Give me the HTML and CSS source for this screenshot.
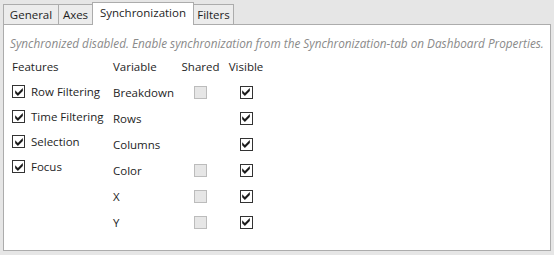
FILE: index.html
```html
<!DOCTYPE html>
<html>
<head>
<meta charset="utf-8">
<link rel="stylesheet" href="styles.css">
</head>
<body>
<div class="window">
  <div class="tabs">
    <div class="tab tab-general">General</div>
    <div class="tab tab-axes">Axes</div>
    <div class="tab tab-sync active">Synchronization</div>
    <div class="tab tab-filters">Filters</div>
  </div>
  <div class="panel">
    <p class="info">Synchronized disabled. Enable synchronization from the Synchronization-tab on Dashboard Properties.</p>
    <div class="content">
      <div class="features">
        <div class="head">Features</div>
        <div class="frow"><span class="cb"><svg viewBox="0 0 7.1 7.4"><polygon points="0,2 0,4.8 2.5,7.4 7.1,2.8 7.1,0 2.5,4.6"/></svg></span>Row Filtering</div>
        <div class="frow"><span class="cb"><svg viewBox="0 0 7.1 7.4"><polygon points="0,2 0,4.8 2.5,7.4 7.1,2.8 7.1,0 2.5,4.6"/></svg></span>Time Filtering</div>
        <div class="frow"><span class="cb"><svg viewBox="0 0 7.1 7.4"><polygon points="0,2 0,4.8 2.5,7.4 7.1,2.8 7.1,0 2.5,4.6"/></svg></span>Selection</div>
        <div class="frow"><span class="cb"><svg viewBox="0 0 7.1 7.4"><polygon points="0,2 0,4.8 2.5,7.4 7.1,2.8 7.1,0 2.5,4.6"/></svg></span>Focus</div>
      </div>
      <div class="vars">
        <div class="head">Variable</div>
        <div class="head c">Shared</div>
        <div class="head c">Visible</div>

        <div class="vrow">Breakdown</div>
        <div class="vrow c"><span class="cb off"></span></div>
        <div class="vrow c"><span class="cb"><svg viewBox="0 0 7.1 7.4"><polygon points="0,2 0,4.8 2.5,7.4 7.1,2.8 7.1,0 2.5,4.6"/></svg></span></div>

        <div class="vrow">Rows</div>
        <div class="vrow c"></div>
        <div class="vrow c"><span class="cb"><svg viewBox="0 0 7.1 7.4"><polygon points="0,2 0,4.8 2.5,7.4 7.1,2.8 7.1,0 2.5,4.6"/></svg></span></div>

        <div class="vrow">Columns</div>
        <div class="vrow c"></div>
        <div class="vrow c"><span class="cb"><svg viewBox="0 0 7.1 7.4"><polygon points="0,2 0,4.8 2.5,7.4 7.1,2.8 7.1,0 2.5,4.6"/></svg></span></div>

        <div class="vrow">Color</div>
        <div class="vrow c"><span class="cb off"></span></div>
        <div class="vrow c"><span class="cb"><svg viewBox="0 0 7.1 7.4"><polygon points="0,2 0,4.8 2.5,7.4 7.1,2.8 7.1,0 2.5,4.6"/></svg></span></div>

        <div class="vrow">X</div>
        <div class="vrow c"><span class="cb off"></span></div>
        <div class="vrow c"><span class="cb"><svg viewBox="0 0 7.1 7.4"><polygon points="0,2 0,4.8 2.5,7.4 7.1,2.8 7.1,0 2.5,4.6"/></svg></span></div>

        <div class="vrow">Y</div>
        <div class="vrow c"><span class="cb off"></span></div>
        <div class="vrow c"><span class="cb"><svg viewBox="0 0 7.1 7.4"><polygon points="0,2 0,4.8 2.5,7.4 7.1,2.8 7.1,0 2.5,4.6"/></svg></span></div>
      </div>
    </div>
  </div>
</div>
</body>
</html>
```
FILE: styles.css
```css
html, body {
  margin: 0;
  padding: 0;
  background: #e6e6e6;
}
body {
  width: 554px;
  height: 255px;
  overflow: hidden;
  font-family: "Open Sans", "Noto Sans", sans-serif;
  font-size: 11.5px;
  color: #1e1e1e;
}
.window {
  padding: 0 3px;
}
.tabs {
  display: flex;
  align-items: flex-end;
  height: 24px;
  position: relative;
  z-index: 2;
}
.tab {
  box-sizing: border-box;
  height: 20px;
  line-height: 19px;
  border: 1px solid #acacac;
  border-bottom: none;
  margin-right: -1px;
  background: #ececec;
  white-space: nowrap;
  text-align: center;
}
.tab-general { width: 56px; }
.tab-axes { width: 35px; }
.tab-sync { width: 102px; }
.tab-filters { width: 41px; }
.tab.active {
  background: #fff;
  height: 23px;
  padding-bottom: 3px;
  margin-bottom: -1px;
  position: relative;
  z-index: 3;
}
.panel {
  width: 546px;
  height: 215px;
  padding-top: 10px;
  border: 1px solid #acacac;
  background: #fff;
  position: relative;
  z-index: 1;
}
.info {
  margin: 0 0 4px 6px;
  line-height: 16px;
  font-size: 11.75px;
  font-style: italic;
  color: #8a8a8a;
  white-space: nowrap;
}
.content {
  display: flex;
  padding-left: 8px;
}
.features {
  width: 101px;
}
.head {
  height: 24px;
  line-height: 24px;
  white-space: nowrap;
}
.frow {
  height: 25px;
  display: flex;
  align-items: center;
  gap: 6px;
  white-space: nowrap;
}
.vars {
  display: grid;
  grid-template-columns: 59px 37px 34px;
  column-gap: 10px;
  grid-template-rows: 24px repeat(6, 26px);
}
.vrow {
  display: flex;
  align-items: center;
  white-space: nowrap;
}
.c {
  justify-content: center;
  display: flex;
}
.cb {
  width: 13px;
  height: 13px;
  box-sizing: border-box;
  border: 1px solid #333;
  background: #fff;
  display: inline-flex;
  align-items: center;
  justify-content: center;
  flex: none;
}
.cb svg {
  width: 8px;
  height: 8px;
  fill: #1a1a1a;
}
.cb.off {
  border-color: #bcbcbc;
  background: #e6e6e6;
}
```
